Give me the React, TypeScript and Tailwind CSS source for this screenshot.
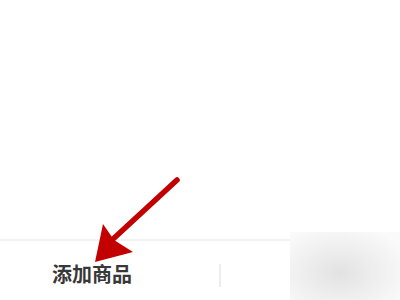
import React from 'react';

const Arrow: React.FC = () => (
  <svg
    className="absolute left-0 top-0 pointer-events-none"
    width="400"
    height="300"
    viewBox="0 0 400 300"
  >
    <line x1="177" y1="180" x2="112" y2="240" stroke="#c20000" strokeWidth="5.5" strokeLinecap="round" />
    <polygon points="95,262 103,224 114,240 133,252" fill="#c20000" />
  </svg>
);

const App: React.FC = () => {
  return (
    <div
      className="relative w-[400px] h-[300px] bg-white overflow-hidden"
      style={{ fontFamily: '"Noto Sans CJK SC", "Noto Sans", sans-serif' }}
    >
      <div className="h-[239px]" />
      <div className="h-[61px] border-t-2 border-[#f2f2f2] flex items-center pt-[9px]">
        <div className="w-[219px] pl-[52px]">
          <span className="text-[20px] font-bold text-[#383838] leading-none">添加商品</span>
        </div>
        <div className="w-[2px] h-[23px] bg-[#ececec]" />
        <div className="flex-1" />
      </div>
      {/* blurred patch over the right part of the bar */}
      <div className="absolute left-[290px] top-[232px] w-[110px] h-[68px] bg-[radial-gradient(ellipse_at_45%_60%,#e2e2e2_0%,#efefef_45%,#fafafa_85%)]" />
      <Arrow />
    </div>
  );
};

export default App;
